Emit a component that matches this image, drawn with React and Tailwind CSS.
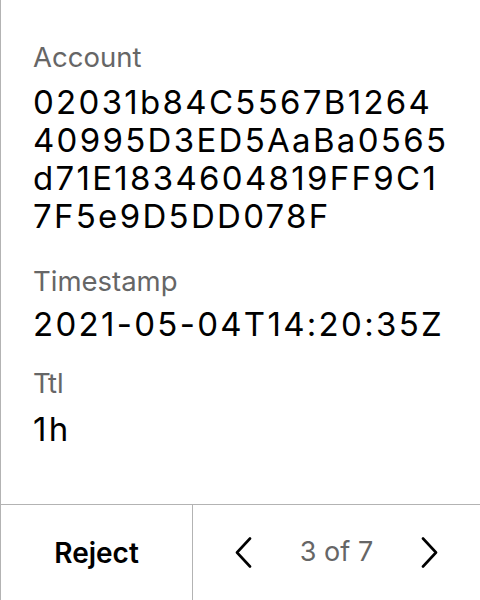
const fields = [
  {
    label: 'Account',
    lines: ['02031b84C5567B1264', '40995D3ED5AaBa0565', 'd71E1834604819FF9C1', '7F5e9D5DD078F'],
    top: 'mt-0',
    gap: 'gap-[10px]',
  },
  { label: 'Timestamp', lines: ['2021-05-04T14:20:35Z'], top: 'mt-[30px]', gap: 'gap-[8px]' },
  { label: 'Ttl', lines: ['1h'], top: 'mt-[24px]', gap: 'gap-[11px]' },
]

function Chevron({ dir }) {
  return (
    <svg width="17" height="31" viewBox="0 0 17 31" fill="none" stroke="currentColor" strokeWidth="2.6" strokeLinecap="round" strokeLinejoin="round">
      {dir === 'left' ? <polyline points="15,1.5 2,15.5 15,29.5" /> : <polyline points="2,1.5 15,15.5 2,29.5" />}
    </svg>
  )
}

export default function App() {
  return (
    <div className="w-[480px] h-[600px] flex flex-col bg-white border-l border-[#b3b3b3] text-black" style={{ fontFamily: 'Inter, "Noto Sans", sans-serif' }}>
      <div className="flex-1 pl-8 pr-[31px] pt-[41px] flex flex-col">
        {fields.map((f) => (
          <div key={f.label} className={`flex flex-col ${f.top} ${f.gap}`}>
            <div className="text-[27.5px] leading-[32px] text-[#666666]">{f.label}</div>
            <div className="text-[33px] leading-[38px] tracking-[2.3px] whitespace-nowrap">
              {f.lines.map((line) => (
                <div key={line}>{line}</div>
              ))}
            </div>
          </div>
        ))}
      </div>
      <div className="h-[96px] border-t border-[#b3b3b3] flex">
        <button className="w-[192px] border-r border-[#b3b3b3] flex items-center justify-center text-[28px] font-semibold">
          Reject
        </button>
        <div className="flex-1 flex items-center justify-between pl-[42px] pr-[42px]">
          <Chevron dir="left" />
          <span className="text-[27px] text-[#666666]">3 of 7</span>
          <Chevron dir="right" />
        </div>
      </div>
    </div>
  )
}
